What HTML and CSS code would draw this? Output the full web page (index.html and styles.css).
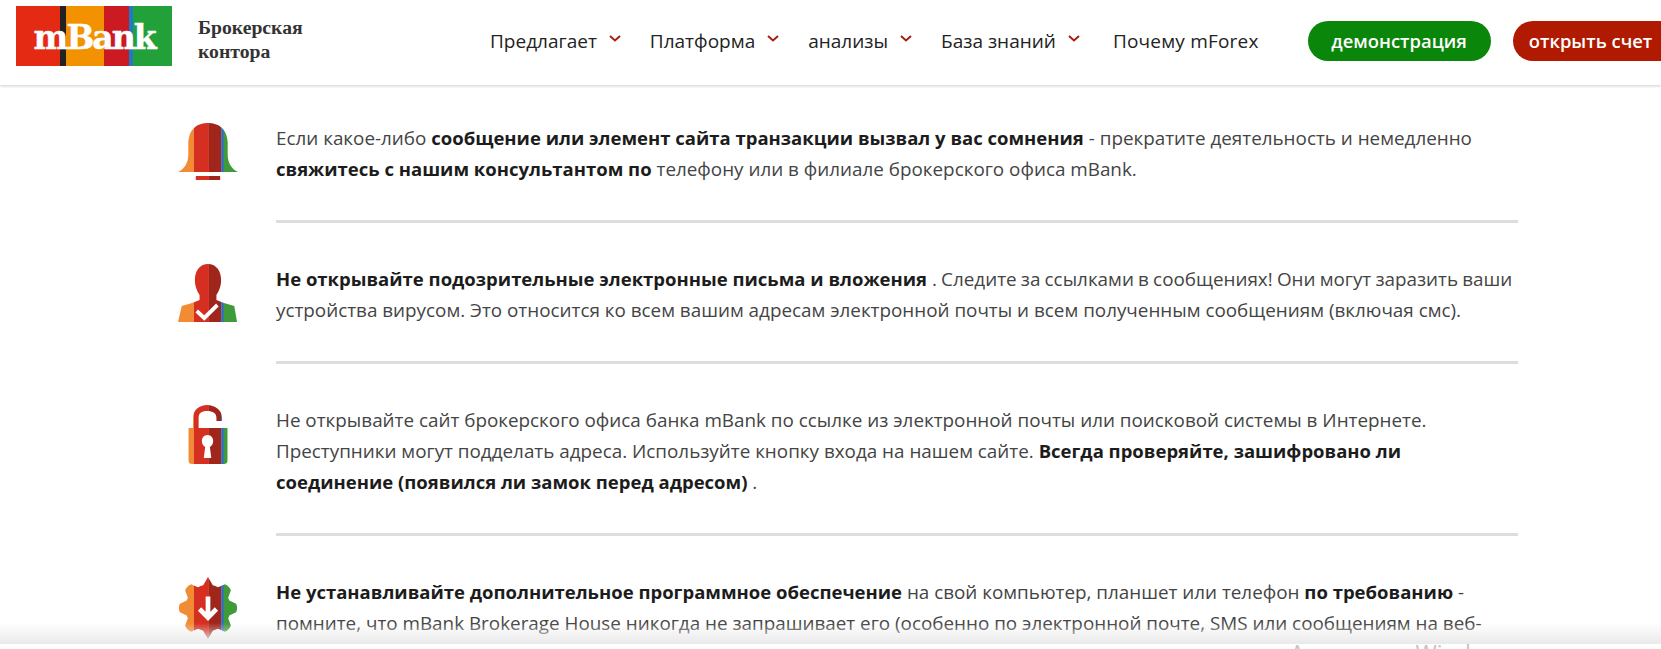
FILE: index.html

```html
<!DOCTYPE html>
<html lang="ru">
<head>
  <meta charset="UTF-8">
  <meta name="viewport" content="width=device-width, initial-scale=1.0">
  <title>mBank - Брокерская контора</title>
  <link rel="stylesheet" href="styles.css">
</head>
<body>
  <svg class="defs" width="0" height="0">
    <defs>
      <g id="stripes">
        <rect x="0" y="0" width="17" height="72" fill="#f28c34"/>
        <rect x="17" y="0" width="16" height="72" fill="#d42f20"/>
        <rect x="33" y="0" width="13" height="72" fill="#a0261c"/>
        <rect x="46" y="0" width="3" height="72" fill="#2f6db5"/>
        <rect x="49" y="0" width="15" height="72" fill="#3f9a3a"/>
      </g>
      <clipPath id="clipBell">
        <path d="M0 52C7 49 11 43 11 34V22C12 9 20 3 32 3S52 9 53 22V34C53 43 57 49 64 52Z"/>
        <rect x="19" y="56" width="26" height="4"/>
      </clipPath>
      <clipPath id="clipUser">
        <path d="M18 19C18 9 24 3 32 3S46 9 46 19C46 26 43 31 41 34V39L49 42L60 45L63 61H0L4 45L15 42L23 39V34C21 31 18 26 18 19Z"/>
      </clipPath>
      <clipPath id="clipLock">
        <path d="M11 25H53V57Q53 61 49 61H15Q11 61 11 57Z"/>
        <path d="M16 25V15C16 7 23 2 31 2S47 7 47 15V18H41V15C41 10 37 8 31 8S22 10 22 15V25Z"/>
      </clipPath>
      <clipPath id="clipGear">
        <circle cx="32" cy="32" r="24"/>
        <path d="M26 10L32 0L38 10Z"/>
        <path d="M26 10L32 0L38 10Z" transform="rotate(180 32 32)"/>
        <path d="M24 10L27.500 2Q32 0 36.500 2L40 10Z" transform="rotate(45 32 32)"/>
        <path d="M24 10L27.500 2Q32 0 36.500 2L40 10Z" transform="rotate(90 32 32)"/>
        <path d="M24 10L27.500 2Q32 0 36.500 2L40 10Z" transform="rotate(135 32 32)"/>
        <path d="M24 10L27.500 2Q32 0 36.500 2L40 10Z" transform="rotate(225 32 32)"/>
        <path d="M24 10L27.500 2Q32 0 36.500 2L40 10Z" transform="rotate(270 32 32)"/>
        <path d="M24 10L27.500 2Q32 0 36.500 2L40 10Z" transform="rotate(315 32 32)"/>
      </clipPath>
    </defs>
  </svg>

  <header class="topbar">
    <a class="logo" href="#">
      <span class="logo-text">mBank</span>
    </a>
    <div class="brand">Брокерская<br>контора</div>
    <nav class="menu">
      <a class="menu-item" href="#">Предлагает <svg class="chev" viewBox="0 0 12 7"><path d="M1 1L6 5.5L11 1"/></svg></a>
      <a class="menu-item" href="#">Платформа <svg class="chev" viewBox="0 0 12 7"><path d="M1 1L6 5.5L11 1"/></svg></a>
      <a class="menu-item" href="#">анализы <svg class="chev" viewBox="0 0 12 7"><path d="M1 1L6 5.5L11 1"/></svg></a>
      <a class="menu-item" href="#">База знаний <svg class="chev" viewBox="0 0 12 7"><path d="M1 1L6 5.5L11 1"/></svg></a>
      <a class="menu-item why" href="#">Почему mForex</a>
    </nav>
    <a class="btn btn-green" href="#">демонстрация</a>
    <a class="btn btn-red" href="#">открыть счет</a>
  </header>

  <main class="list">
    <div class="row">
      <div class="ico">
        <svg width="60" height="64" viewBox="0 3 64 64" preserveAspectRatio="none"><g clip-path="url(#clipBell)"><use href="#stripes"/></g></svg>
      </div>
      <p class="txt">Если какое-либо <b>сообщение или элемент сайта транзакции вызвал у вас сомнения</b> - прекратите деятельность и немедленно <b>свяжитесь с нашим консультантом по</b> телефону или в филиале брокерского офиса mBank.</p>
    </div>

    <div class="row">
      <div class="ico">
        <svg width="60" height="64" viewBox="0 3 64 64" preserveAspectRatio="none">
          <g clip-path="url(#clipUser)"><use href="#stripes"/></g>
          <path d="M20 50L28 57L42 44" fill="none" stroke="#fff" stroke-width="4"/>
        </svg>
      </div>
      <p class="txt keep"><b>Не открывайте подозрительные электронные письма и вложения</b> <span class="tight">. Следите за ссылками в сообщениях! Они могут заразить ваши</span><br>устройства вирусом. Это относится ко всем вашим адресам электронной почты и всем полученным сообщениям (включая смс).</p>
    </div>

    <div class="row">
      <div class="ico">
        <svg width="60" height="64" viewBox="0 2 64 64" preserveAspectRatio="none">
          <g clip-path="url(#clipLock)"><use href="#stripes"/></g>
          <path d="M31.500 32C27.500 32 25.500 35 25.500 38C25.500 41 27 43 29 44L27.500 55H35.500L34 44C36 43 37.500 41 37.500 38C37.500 35 35.500 32 31.500 32Z" fill="#fff"/>
        </svg>
      </div>
      <p class="txt">Не открывайте сайт брокерского офиса банка mBank по ссылке из электронной почты или поисковой системы в Интернете. Преступники могут подделать адреса. Используйте кнопку входа на нашем сайте. <b>Всегда проверяйте, зашифровано ли соединение (появился ли замок перед адресом)</b> .</p>
    </div>

    <div class="row">
      <div class="ico">
        <svg width="60" height="62" viewBox="0 0 64 64" preserveAspectRatio="none">
          <g clip-path="url(#clipGear)"><use href="#stripes"/></g>
          <path d="M32 20V41M23 33L32 42L41 33" fill="none" stroke="#fff" stroke-width="5"/>
        </svg>
      </div>
      <p class="txt"><b>Не устанавливайте дополнительное программное обеспечение</b> на свой компьютер, планшет или телефон <b>по требованию</b> - помните, что mBank Brokerage House никогда не запрашивает его (особенно по электронной почте, SMS или сообщениям на веб-сайтах). в случае получения такого запроса немедленно сообщите об этом нашему консультанту.</p>
    </div>
  </main>

  <div class="fade"></div>
  <div class="watermark">Активация Windows</div>
</body>
</html>
```

FILE: styles.css

```css
html, body {
  margin: 0;
  height: 649px;
  overflow: hidden;
  background: #fff;
}

body {
  font-family: "Open Sans", sans-serif;
  color: #444;
  position: relative;
}

.defs {
  display: block;
  height: 0;
}

.topbar {
  display: flex;
  align-items: center;
  box-sizing: border-box;
  height: 85px;
  padding-left: 16px;
  padding-bottom: 4px;
  background: #fff;
  box-shadow: 0 1px 3px rgba(0, 0, 0, 0.2);
  white-space: nowrap;
  overflow: hidden;
}

.logo {
  display: flex;
  align-items: center;
  justify-content: center;
  flex: none;
  box-sizing: border-box;
  width: 156px;
  height: 60px;
  margin-top: -9px;
  padding-top: 3px;
  background: linear-gradient(to right,
    #e42a12 0, #e42a12 44px,
    #222 44px, #222 50px,
    #f39200 50px, #f39200 88px,
    #cc1a22 88px, #cc1a22 113px,
    #1f78c8 113px, #1f78c8 117px,
    #22a03a 117px);
  text-decoration: none;
}

.logo-text {
  color: #fff;
  font-family: "DejaVu Serif", serif;
  font-weight: 700;
  font-size: 33px;
  letter-spacing: -2px;
  -webkit-text-stroke: 0.5px #fff;
}

.brand {
  flex: none;
  width: 292px;
  margin-left: 26px;
  margin-top: -4px;
  font-family: "Liberation Serif", serif;
  font-weight: 700;
  font-size: 19.7px;
  line-height: 24px;
  color: #333;
}

.menu {
  display: flex;
  align-items: center;
  flex: none;
  font-size: 19px;
}

.menu-item {
  display: flex;
  align-items: center;
  margin-right: 29px;
  color: #222;
  text-decoration: none;
}

.why {
  margin-left: 4px;
  margin-right: 49px;
  letter-spacing: 0.2px;
}

.chev {
  width: 12px;
  height: 7px;
  margin-left: 12px;
  margin-top: -5px;
  fill: none;
  stroke: #a61e12;
  stroke-width: 2;
}

.btn {
  flex: none;
  height: 40px;
  line-height: 39px;
  border-radius: 20px;
  box-sizing: border-box;
  color: #fff;
  font-size: 18.4px;
  font-weight: 600;
  text-align: center;
  text-decoration: none;
}

.btn-green {
  width: 183px;
  background: #0a860a;
}

.btn-red {
  width: 190px;
  margin-left: 22px;
  padding-right: 34px;
  background: #b01a00;
}

.list {
  width: 1341px;
  padding-left: 177px;
  padding-top: 38px;
}

.row {
  display: flex;
  margin-bottom: 41px;
}

.ico {
  flex: none;
  width: 99px;
}

.ico svg {
  display: block;
  margin-left: 1px;
}

.txt {
  flex: 1;
  min-width: 0;
  margin: 0;
  font-size: 18.85px;
  line-height: 31px;
  color: #444;
  padding-bottom: 35px;
  border-bottom: 3px solid #ddd;
}

.txt b {
  color: #1c1c1c;
  font-size: 18.5px;
  line-height: 1;
  font-weight: 700;
}

.keep {
  white-space: nowrap;
}

.tight {
  word-spacing: -0.7px;
}

.fade {
  position: absolute;
  left: 0;
  right: 0;
  bottom: 0;
  height: 26px;
  background: linear-gradient(to bottom, rgba(255, 255, 255, 0), #e9e9e9 82%, #fff 82%);
}

.watermark {
  position: absolute;
  left: 1290px;
  top: 638px;
  font-size: 23px;
  line-height: 30px;
  color: #c4c4c4;
  white-space: nowrap;
}
```
